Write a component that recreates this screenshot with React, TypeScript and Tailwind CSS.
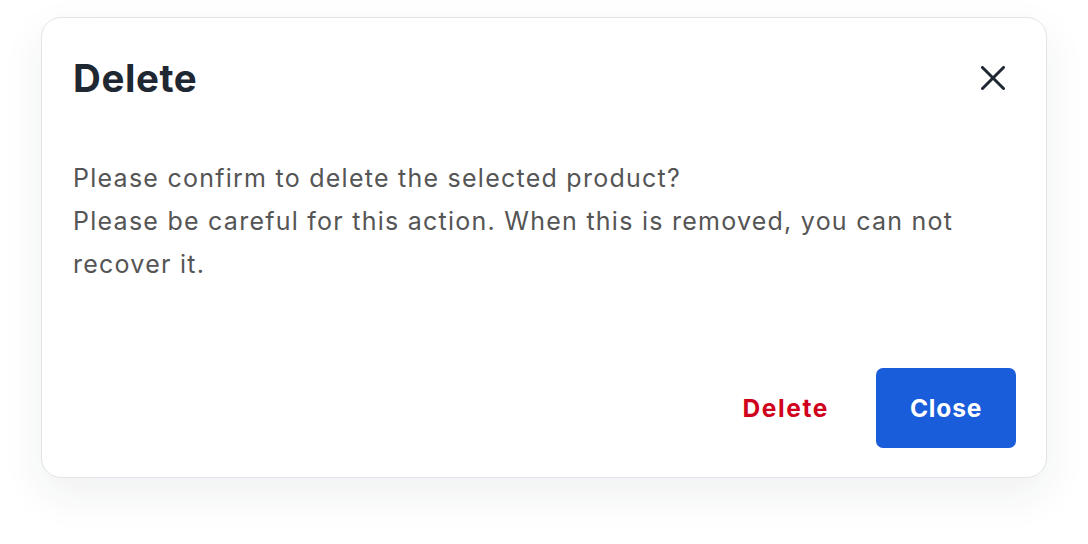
import React from "react";

export default function App() {
  return (
    <div className="w-[1088px] h-[544px] bg-white" style={{ fontFamily: "Inter, 'Noto Sans', sans-serif" }}>
      <div className="pt-[17px] pl-[41px]">
        <div className="w-[1006px] h-[461px] rounded-[20px] border border-[#e1e4e8] bg-white shadow-[0_16px_44px_rgba(30,41,59,0.07)] flex flex-col pl-[31px] pr-[30px] pt-[36px] pb-[29px]">
          <div className="flex items-center justify-between h-[48px]">
            <h2 className="text-[38.5px] leading-[48px] font-bold text-[#1f2733] tracking-[0.6px]">Delete</h2>
            <button className="w-[24px] h-[24px] mr-[11px] text-[#1f2733]">
              <svg width="24" height="24" viewBox="0 0 24 24" fill="none" stroke="currentColor" strokeWidth="3" strokeLinecap="round">
                <line x1="1.5" y1="1.5" x2="22.5" y2="22.5" />
                <line x1="22.5" y1="1.5" x2="1.5" y2="22.5" />
              </svg>
            </button>
          </div>
          <div className="mt-[55px] text-[25px] leading-[43px] text-[#555555] tracking-[1.25px] w-[900px]">
            <p>Please confirm to delete the selected product?</p>
            <p>Please be careful for this action. When this is removed, you can not recover it.</p>
          </div>
          <div className="mt-auto flex items-center justify-end gap-[47px]">
            <button className="text-[24.5px] font-bold text-[#d0021b] tracking-[1.6px]">Delete</button>
            <button className="w-[140px] h-[80px] rounded-[7px] bg-[#1a5ddb] text-white text-[24.5px] font-bold tracking-[0.8px]">Close</button>
          </div>
        </div>
      </div>
    </div>
  );
}
